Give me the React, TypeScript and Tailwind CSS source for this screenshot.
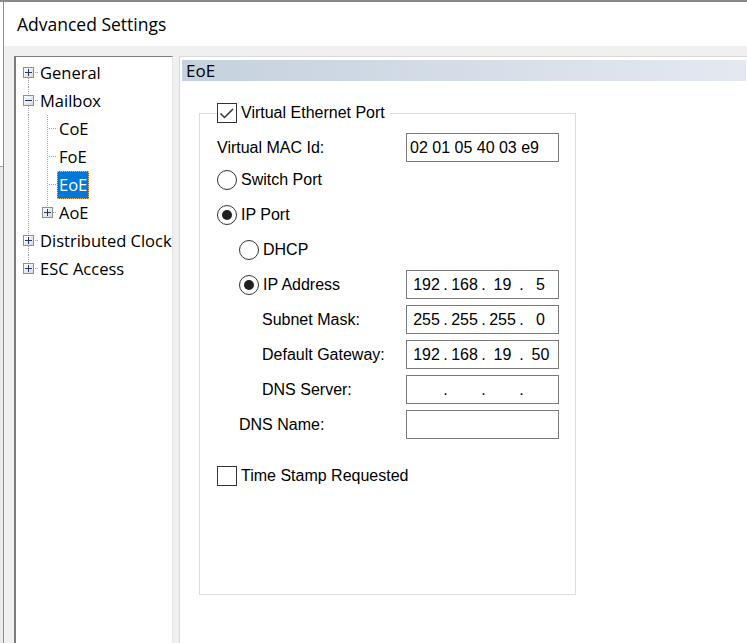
import { Fragment } from 'react';

type Sign = 'plus' | 'minus';

function Expander({ x, sign }: { x: number; sign: Sign }) {
	// 11x11 box with plus/minus, top at y=8
	return (
		<g shapeRendering="crispEdges">
			<rect x={x + 0.5} y={8.5} width={10} height={10} fill="url(#expfill)" stroke="#919191" />
			<rect x={x + 2} y={13} width={7} height={1} fill="#1e3a66" />
			{sign === 'plus' && <rect x={x + 5} y={10} width={1} height={7} fill="#1e3a66" />}
		</g>
	);
}

function Dots({ x1, y1, x2, y2 }: { x1: number; y1: number; x2: number; y2: number }) {
	return <line x1={x1} y1={y1} x2={x2} y2={y2} stroke="#a0a0a0" strokeDasharray="1 1" shapeRendering="crispEdges" />;
}

function RootGutter({ sign, up, down }: { sign: Sign; up: boolean; down: boolean }) {
	return (
		<svg width="22" height="28" className="shrink-0">
			{up && <Dots x1={12.5} y1={0} x2={12.5} y2={8} />}
			{down && <Dots x1={12.5} y1={19} x2={12.5} y2={28} />}
			<Dots x1={19} y1={13.5} x2={22} y2={13.5} />
			<Expander x={7} sign={sign} />
		</svg>
	);
}

function ChildGutter({ sign }: { sign?: Sign }) {
	return (
		<svg width="41" height="28" className="shrink-0">
			<Dots x1={12.5} y1={0} x2={12.5} y2={28} />
			{sign ? (
				<>
					<Dots x1={31.5} y1={0} x2={31.5} y2={8} />
					<Dots x1={37} y1={13.5} x2={41} y2={13.5} />
					<Expander x={26} sign={sign} />
				</>
			) : (
				<>
					<Dots x1={31.5} y1={0} x2={31.5} y2={28} />
					<Dots x1={33} y1={13.5} x2={41} y2={13.5} />
				</>
			)}
		</svg>
	);
}

function TreeLabel({ text, selected }: { text: string; selected?: boolean }) {
	return (
		<span
			className={
				selected
					? 'h-full flex items-center px-[1px] bg-[#0078d7] text-white border border-dotted border-[#f3b36b]'
					: 'h-full flex items-center px-[2px] text-black'
			}
		>
			{text}
		</span>
	);
}

function Tree() {
	return (
		<div className="w-[159px] shrink-0 bg-white border-l-2 border-t border-r border-l-[#7d7d7d] border-t-[#7d7d7d] border-r-[#e3e3e3] overflow-hidden pt-[2px] font-['Open_Sans',sans-serif] text-[16.5px] whitespace-nowrap">
			<svg width="0" height="0" className="absolute">
				<defs>
					<linearGradient id="expfill" x1="0" y1="0" x2="1" y2="1">
						<stop offset="0" stopColor="#ffffff" />
						<stop offset="1" stopColor="#d8d8d8" />
					</linearGradient>
				</defs>
			</svg>
			<div className="flex h-[28px] items-center">
				<RootGutter sign="plus" up={false} down />
				<TreeLabel text="General" />
			</div>
			<div className="flex h-[28px] items-center">
				<RootGutter sign="minus" up down />
				<TreeLabel text="Mailbox" />
			</div>
			<div className="flex h-[28px] items-center">
				<ChildGutter />
				<TreeLabel text="CoE" />
			</div>
			<div className="flex h-[28px] items-center">
				<ChildGutter />
				<TreeLabel text="FoE" />
			</div>
			<div className="flex h-[28px] items-center">
				<ChildGutter />
				<TreeLabel text="EoE" selected />
			</div>
			<div className="flex h-[28px] items-center">
				<ChildGutter sign="plus" />
				<TreeLabel text="AoE" />
			</div>
			<div className="flex h-[28px] items-center">
				<RootGutter sign="plus" up down />
				<TreeLabel text="Distributed Clock" />
			</div>
			<div className="flex h-[28px] items-center">
				<RootGutter sign="plus" up down={false} />
				<TreeLabel text="ESC Access" />
			</div>
		</div>
	);
}

function CheckBox({ checked }: { checked?: boolean }) {
	return (
		<span className="w-[20px] h-[20px] shrink-0 border border-[#333333] bg-white block">
			{checked && (
				<svg width="18" height="18" viewBox="0 0 18 18">
					<path d="M2.5 9.5 L6.5 13.5 L15 5" fill="none" stroke="#333333" strokeWidth="1.5" />
				</svg>
			)}
		</span>
	);
}

function Radio({ on }: { on?: boolean }) {
	return (
		<span className="w-[20px] h-[20px] shrink-0 rounded-full border border-[#333333] bg-white flex items-center justify-center">
			{on && <span className="w-[10px] h-[10px] rounded-full bg-[#1f1f1f]" />}
		</span>
	);
}

function TextBox({ value }: { value: string }) {
	return <div className="w-[153px] h-[29px] shrink-0 border border-[#7a7a7a] bg-white flex items-center pl-[3px]">{value}</div>;
}

function IpBox({ parts }: { parts: string[] }) {
	return (
		<div className="w-[153px] h-[29px] shrink-0 border border-[#7a7a7a] bg-white flex items-center pl-[3px]">
			{parts.map((p, i) => (
				<Fragment key={i}>
					{i > 0 && <span className="w-[5px] text-center">.</span>}
					<span className="w-[33px] text-center">{p}</span>
				</Fragment>
			))}
		</div>
	);
}

function EoePanel() {
	return (
		<fieldset className="ml-[17px] mt-[22px] w-[377px] border border-[#dcdcdc] pl-[17px] pr-[16px] pb-[104px]">
			<legend className="flex items-center h-[20px] gap-[4px] pr-[5px] leading-[20px]">
				<CheckBox checked />
				<span>Virtual Ethernet Port</span>
			</legend>

			<div className="flex flex-col">
				<div className="mt-[10px] h-[29px] flex items-center justify-between">
					<span>Virtual MAC Id:</span>
					<TextBox value="02 01 05 40 03 e9" />
				</div>
				<div className="mt-[3px] h-[29px] flex items-center gap-[4px]">
					<Radio />
					<span>Switch Port</span>
				</div>
				<div className="mt-[6px] h-[29px] flex items-center gap-[4px]">
					<Radio on />
					<span>IP Port</span>
				</div>
				<div className="mt-[6px] h-[29px] flex items-center gap-[4px] pl-[22px]">
					<Radio />
					<span>DHCP</span>
				</div>
				<div className="mt-[6px] h-[29px] flex items-center justify-between pl-[22px]">
					<span className="flex items-center gap-[4px]">
						<Radio on />
						<span>IP Address</span>
					</span>
					<IpBox parts={['192', '168', '19', '5']} />
				</div>
				<div className="mt-[6px] h-[29px] flex items-center justify-between pl-[45px]">
					<span>Subnet Mask:</span>
					<IpBox parts={['255', '255', '255', '0']} />
				</div>
				<div className="mt-[6px] h-[29px] flex items-center justify-between pl-[45px]">
					<span>Default Gateway:</span>
					<IpBox parts={['192', '168', '19', '50']} />
				</div>
				<div className="mt-[6px] h-[29px] flex items-center justify-between pl-[45px]">
					<span>DNS Server:</span>
					<IpBox parts={['', '', '', '']} />
				</div>
				<div className="mt-[6px] h-[29px] flex items-center justify-between pl-[22px]">
					<span>DNS Name:</span>
					<TextBox value="" />
				</div>
				<div className="mt-[22px] h-[29px] flex items-center gap-[4px]">
					<CheckBox />
					<span>Time Stamp Requested</span>
				</div>
			</div>
		</fieldset>
	);
}

export default function App() {
	return (
		<div className="w-[747px] h-[643px] overflow-hidden border-t-2 border-[#8a8a8a] flex bg-white">
			<div className="w-[3px] shrink-0 flex flex-col">
				<div className="h-[164px] bg-white" />
				<div className="h-px bg-[#a0a0a0]" />
				<div className="flex-1 bg-[#ececec]" />
			</div>

			<div className="flex-1 min-w-0 flex flex-col border-l border-[#8f8f8f]">
				<div className="h-[44px] shrink-0 bg-white flex items-center pl-[13px] font-['Open_Sans',sans-serif] text-[17.5px] text-black">
					Advanced Settings
				</div>

				<div className="flex-1 min-h-0 bg-[#f0f0f0] flex pl-[10px] pt-[10px] gap-[6px]">
					<Tree />

					<div className="flex-1 min-w-0 bg-white border-l border-t border-[#d9d9d9] pl-[2px] pt-[3px] pr-[1px] font-['Liberation_Sans',Arial,sans-serif] text-[16px] text-black">
						<div className="h-[21px] flex items-center pl-[4px] bg-gradient-to-r from-[#c5d1de] to-[#e4e9f1] font-['Open_Sans',sans-serif] text-[17px]">
							EoE
						</div>
						<EoePanel />
					</div>
				</div>
			</div>
		</div>
	);
}
